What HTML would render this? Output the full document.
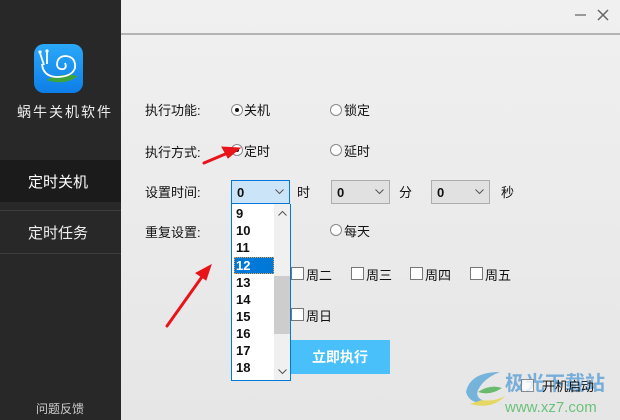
<!DOCTYPE html>
<html><head><meta charset="utf-8"><style>
*{margin:0;padding:0;box-sizing:border-box}
body{width:620px;height:420px;overflow:hidden;position:relative;background:linear-gradient(#f0f0f0,#e6e6e6);font-family:"Liberation Sans","Noto Sans CJK SC",sans-serif;color:#111}
.a{position:absolute;white-space:nowrap}
#side{position:absolute;left:0;top:0;width:121px;height:420px;background:#282828}
.lbl{font-size:13px}
.rad{position:absolute;width:12px;height:12px;border:1px solid #888;border-radius:50%;background:#fff}
.rad.on::after{content:"";position:absolute;left:3px;top:3px;width:4px;height:4px;border-radius:50%;background:#111}
.cb{position:absolute;width:13px;height:13px;border:1px solid #777;background:#fff}
.sel{position:absolute;height:24px;width:59px;border:1px solid #adadad;background:#e1e1e1;font-weight:bold;font-size:13px;padding:4px 0 0 5px}
.sel svg{position:absolute;right:5px;top:8px}
.it{position:absolute;left:2px;width:40px;height:17px;font-weight:bold;font-size:13px;padding:1px 0 0 2px}
</style></head><body>
<div id="side">
 <div class="a" style="left:34px;top:44px;width:49px;height:49px;border-radius:10px;background:linear-gradient(#2aa8f8,#0d7ee8);overflow:hidden">
  <svg width="49" height="49" viewBox="0 0 49 49"><path d="M12 36 Q28 28 44 32 Q32 42 12 36Z" fill="#3da33d"/><g fill="none" stroke="#fff" stroke-width="1.8"><path d="M8 20 Q9 32 22 33 Q38 33 41 24 Q42 13 32 12 Q23 12 23 21 Q24 26 30 25 Q33 23 31 19"/><path d="M10 21 L6 9 M13 20 L13 8"/></g><circle cx="6" cy="8" r="1.6" fill="#fff"/><circle cx="13" cy="7" r="1.6" fill="#fff"/></svg>
 </div>
 <div class="a" style="left:17px;top:102px;color:#eee;font-size:14px;letter-spacing:2px">蜗牛关机软件</div>
 <div class="a" style="left:0;top:160px;width:121px;height:42px;background:#1b1b1b"></div>
 <div class="a" style="left:0;top:210px;width:121px;height:1px;background:#3c3c3c"></div>
 <div class="a" style="left:28px;top:171px;color:#fff;font-size:15px">定时关机</div>
 <div class="a" style="left:28px;top:222px;color:#eee;font-size:15px">定时任务</div>
 <div class="a" style="left:0;top:253px;width:121px;height:1px;background:#3c3c3c"></div>
 <div class="a" style="left:36px;top:400px;color:#ccc;font-size:12px">问题反馈</div>
</div>
<div class="a" style="left:121px;top:33px;width:499px;height:2px;background:#b4b4b4"></div>
<div class="a" style="left:575px;top:14px;width:11px;height:2px;background:#999"></div>
<svg class="a" style="left:597px;top:9px" width="12" height="12"><path d="M1 1L11 11M11 1L1 11" stroke="#666" stroke-width="1.5"/></svg>

<div class="a lbl" style="left:145px;top:100px">执行功能:</div>
<div class="a lbl" style="left:145px;top:142px">执行方式:</div>
<div class="a lbl" style="left:145px;top:182px">设置时间:</div>
<div class="a lbl" style="left:145px;top:222px">重复设置:</div>

<div class="rad on" style="left:231px;top:104px"></div><div class="a lbl" style="left:244px;top:100px">关机</div>
<div class="rad" style="left:330px;top:104px"></div><div class="a lbl" style="left:344px;top:100px">锁定</div>
<div class="rad on" style="left:231px;top:144px"></div><div class="a lbl" style="left:244px;top:141px">定时</div>
<div class="rad" style="left:330px;top:144px"></div><div class="a lbl" style="left:344px;top:141px">延时</div>
<div class="rad" style="left:330px;top:224px"></div><div class="a lbl" style="left:344px;top:221px">每天</div>

<div class="sel" style="left:231px;top:180px;background:#cce4f7;border-color:#0078d7">0<svg width="9" height="6"><path d="M.5.5L4.5 4.5 8.5.5" fill="none" stroke="#555"/></svg></div>
<div class="a lbl" style="left:297px;top:182px">时</div>
<div class="sel" style="left:331px;top:180px">0<svg width="9" height="6"><path d="M.5.5L4.5 4.5 8.5.5" fill="none" stroke="#555"/></svg></div>
<div class="a lbl" style="left:399px;top:182px">分</div>
<div class="sel" style="left:431px;top:180px">0<svg width="9" height="6"><path d="M.5.5L4.5 4.5 8.5.5" fill="none" stroke="#555"/></svg></div>
<div class="a lbl" style="left:501px;top:182px">秒</div>

<div class="cb" style="left:291px;top:267px"></div><div class="a lbl" style="left:306px;top:265px">周二</div>
<div class="cb" style="left:351px;top:267px"></div><div class="a lbl" style="left:366px;top:265px">周三</div>
<div class="cb" style="left:410px;top:267px"></div><div class="a lbl" style="left:425px;top:265px">周四</div>
<div class="cb" style="left:470px;top:267px"></div><div class="a lbl" style="left:485px;top:265px">周五</div>
<div class="cb" style="left:291px;top:308px"></div><div class="a lbl" style="left:306px;top:306px">周日</div>

<div class="a" style="left:290px;top:340px;width:100px;height:34px;background:#4ac0fb;color:#fff;font-weight:bold;font-size:14px;text-align:center;line-height:34px">立即执行</div>

<div class="a" style="left:231px;top:204px;width:60px;height:177px;background:#fff;border:1px solid #0078d7;border-top:none">
 <div class="a" style="left:42px;top:0;width:16px;height:176px;background:#f0f0f0"></div>
 <div class="a" style="left:42px;top:72px;width:16px;height:58px;background:#cdcdcd"></div>
 <svg class="a" style="left:46px;top:6px" width="9" height="6"><path d="M.5 5.5L4.5 1.5 8.5 5.5" fill="none" stroke="#555"/></svg>
 <svg class="a" style="left:46px;top:165px" width="9" height="6"><path d="M.5.5L4.5 4.5 8.5.5" fill="none" stroke="#555"/></svg>
 <div class="it" style="top:1px">9</div>
 <div class="it" style="top:18px">10</div>
 <div class="it" style="top:35px">11</div>
 <div class="it" style="top:53px;background:#0078d7;color:#fff;outline:1px dotted #f0a040;outline-offset:-1px">12</div>
 <div class="it" style="top:70px">13</div>
 <div class="it" style="top:87px">14</div>
 <div class="it" style="top:104px">15</div>
 <div class="it" style="top:121px">16</div>
 <div class="it" style="top:138px">17</div>
 <div class="it" style="top:155px">18</div>
</div>

<svg class="a" style="left:0;top:0" width="620" height="420">
 <g fill="#e8141a" stroke="#e8141a" stroke-linecap="round">
  <path d="M204 163L230 152" stroke-width="3"/><path d="M240 148L222 147L228 158Z"/>
  <path d="M167 326L204 274" stroke-width="3"/><path d="M211 265L196 273L206 280Z"/>
 </g>
 <g opacity=".8"><path d="M500 372 Q470 372 466 392 Q470 406 490 402 Q474 400 478 390 Q484 378 500 372Z" fill="#5aa7d8"/><path d="M470 404 Q492 410 505 396 Q494 402 482 400Z" fill="#e5d443"/><path d="M478 392 Q490 384 502 388 Q490 396 478 392Z" fill="#4cb050"/></g>
 <text x="505" y="390" font-size="20" font-weight="bold" fill="#5b9fd6" fill-opacity=".8" font-family="Noto Sans CJK SC,sans-serif">极光下载站</text>
 <text x="505" y="412" font-size="15" fill="#4cb860" fill-opacity=".8" font-family="Liberation Sans,sans-serif">www.xz7.com</text>
</svg>
<div class="cb" style="left:521px;top:379px;opacity:.8"></div>
<div class="a lbl" style="left:542px;top:376px">开机启动</div>
</body></html>
